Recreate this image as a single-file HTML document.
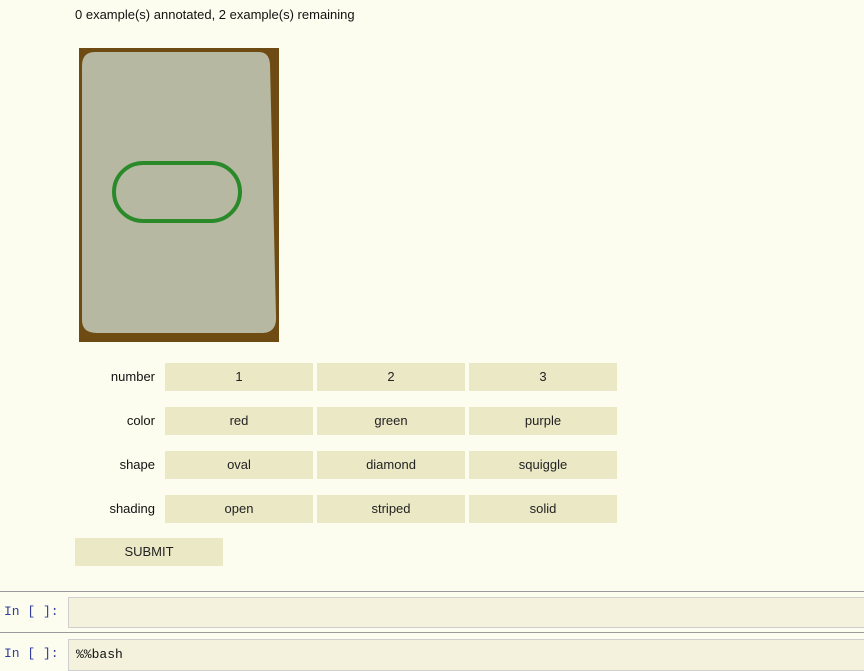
<!DOCTYPE html>
<html><head><style>
body{margin:0;width:864px;height:658px;background:#fdfdef;font-family:"Liberation Sans",sans-serif;font-size:13px;color:#111;position:relative;overflow:hidden}
.a{position:absolute}
.btn{position:absolute;width:148px;height:28px;background:#ebe8c6;text-align:center;line-height:28px;color:#222}
.lbl{position:absolute;width:80px;left:75px;text-align:right;line-height:28px}
.pr{position:absolute;left:4px;font-family:"Liberation Mono",monospace;color:#303f9f;font-size:13px}
.box{position:absolute;left:68px;width:800px;border:1px solid #cfcfcf;background:#f4f2dc}
</style></head><body>
<div class="a" style="left:75px;top:7px">0 example(s) annotated, 2 example(s) remaining</div>
<svg class="a" style="left:79px;top:48px" width="200" height="294">
<rect width="200" height="294" fill="#6e4b12"/>
<path d="M16 4 H180 Q190 4 191 16 L197 268 Q198 284 184 285 H18 Q3 285 3 272 V18 Q3 4 16 4Z" fill="#b6b8a2"/>
<rect x="35" y="115" width="126" height="58" rx="29" fill="none" stroke="#2a8a2a" stroke-width="4"/>
</svg>
<div class="lbl" style="top:363px">number</div>
<div class="btn" style="left:165px;top:363px">1</div><div class="btn" style="left:317px;top:363px">2</div><div class="btn" style="left:469px;top:363px">3</div>
<div class="lbl" style="top:407px">color</div>
<div class="btn" style="left:165px;top:407px">red</div><div class="btn" style="left:317px;top:407px">green</div><div class="btn" style="left:469px;top:407px">purple</div>
<div class="lbl" style="top:451px">shape</div>
<div class="btn" style="left:165px;top:451px">oval</div><div class="btn" style="left:317px;top:451px">diamond</div><div class="btn" style="left:469px;top:451px">squiggle</div>
<div class="lbl" style="top:495px">shading</div>
<div class="btn" style="left:165px;top:495px">open</div><div class="btn" style="left:317px;top:495px">striped</div><div class="btn" style="left:469px;top:495px">solid</div>
<div class="btn" style="left:75px;top:538px">SUBMIT</div>
<div class="a" style="left:0;top:591px;width:864px;height:1px;background:#9a9a9a"></div>
<div class="pr" style="top:604px">In [ ]:</div>
<div class="box" style="top:597px;height:29px"></div>
<div class="a" style="left:0;top:632px;width:864px;height:1px;background:#9a9a9a"></div>
<div class="pr" style="top:646px">In [ ]:</div>
<div class="box" style="top:639px;height:30px"><span style="font-family:'Liberation Mono',monospace;position:absolute;left:7px;top:7px">%%bash</span></div>
</body></html>
